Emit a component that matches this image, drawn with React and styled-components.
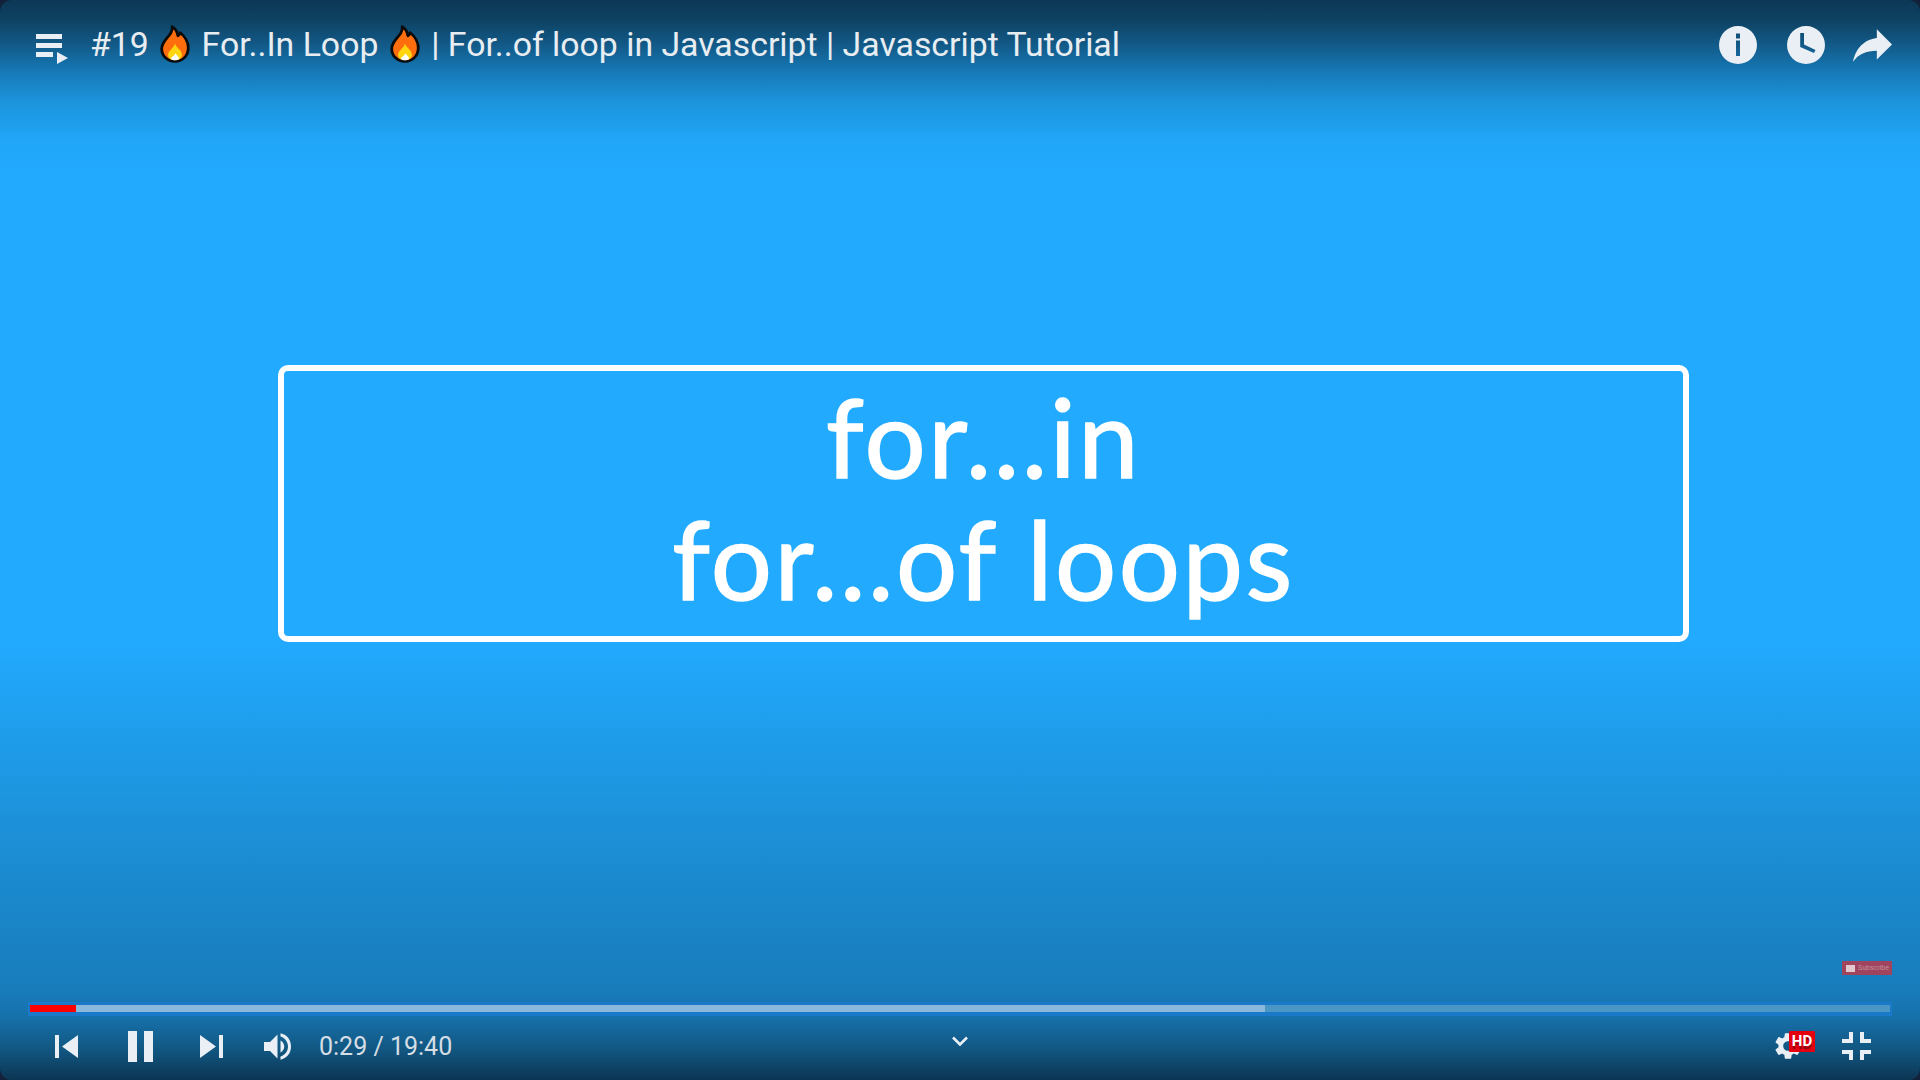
import React from "react";
import styled, { createGlobalStyle } from "styled-components";

const Global = createGlobalStyle`
  html, body { margin: 0; padding: 0; background: #14213a; }
  body { width: 1920px; height: 1080px; overflow: hidden; font-family: Roboto, "Liberation Sans", sans-serif; }
`;

const ICON = "#e9eff5";

const Player = styled.div`
  width: 1920px;
  height: 1080px;
  display: flex;
  flex-direction: column;
  overflow: hidden;
  border-radius: 12px;
  background: linear-gradient(
    180deg,
    #0c3755 0,
    #0e4263 20px,
    #125a88 45px,
    #1677b4 70px,
    #1c93da 100px,
    #21a6f8 140px,
    #22aaff 175px,
    #22aaff 640px,
    #1f9fee 720px,
    #1c8fd6 840px,
    #187cbb 990px,
    #166fa8 1020px,
    #115680 1050px,
    #0c3553 1080px
  );
`;

const TopBar = styled.header`
  height: 90px;
  flex: none;
  display: flex;
  align-items: center;
  padding: 0 28px 0 36px;
`;

const QueueIcon = styled.svg`
  width: 32px;
  height: 32px;
  margin: 10px 22px 0 0;
  flex: none;
  fill: ${ICON};
`;

const Title = styled.h1`
  margin: 0;
  flex: 1;
  font: 400 33.8px/44px Roboto, sans-serif;
  color: #e8edf2;
  white-space: pre;
`;

const Flame = styled.svg`
  width: 30px;
  height: 38px;
  margin: 0 3px;
  vertical-align: -7px;
`;

const TopActions = styled.div`
  display: flex;
  align-items: center;
  gap: 28px;
`;

const TopIcon = styled.svg`
  display: block;
  width: ${(p) => p.$w}px;
  height: ${(p) => p.$h}px;
  margin-right: ${(p) => p.$mr || 0}px;
  fill: ${ICON};
`;

const Stage = styled.main`
  flex: 1;
  position: relative;
  display: flex;
  align-items: flex-start;
  padding: 275px 0 0 278px;
`;

const TitleCard = styled.div`
  box-sizing: border-box;
  width: 1411px;
  height: 277px;
  border: 6px solid #fff;
  border-radius: 10px;
  display: flex;
  flex-direction: column;
  align-items: center;
  justify-content: center;
  padding-bottom: 14px;
  color: #fff;
  font: 400 108px/122px Lato, "Open Sans", sans-serif;
  letter-spacing: 2.5px;
  -webkit-text-stroke: 1.5px #fff;
`;

const CardLine = styled.div`
  white-space: pre;
`;

const Watermark = styled.div`
  position: absolute;
  right: 28px;
  bottom: 27px;
  width: 50px;
  height: 14px;
  box-sizing: border-box;
  padding-left: 4px;
  display: flex;
  align-items: center;
  gap: 3px;
  background: rgba(205, 50, 60, 0.75);
  border-radius: 1px;
  color: rgba(255, 255, 255, 0.4);
  font: 400 7px/14px Roboto, sans-serif;
  white-space: nowrap;
`;

const WatermarkMark = styled.span`
  width: 9px;
  height: 7px;
  background: rgba(255, 255, 255, 0.7);
  flex: none;
`;

const Progress = styled.div`
  flex: none;
  margin: 0 28px;
  padding: 3px 2px 4px;
  background: #1a79c8;
  display: flex;
`;

const Segment = styled.div`
  height: 7px;
  width: ${(p) => p.$w || 0}px;
  flex: ${(p) => (p.$w ? "none" : 1)};
  background: ${(p) => p.$c};
`;

const Controls = styled.footer`
  flex: none;
  height: 60px;
  padding: 0 49px 4px;
  display: grid;
  grid-template-columns: 1fr auto 1fr;
  align-items: center;
`;

const LeftGroup = styled.div`
  display: flex;
  align-items: center;
  margin-left: 6px;
`;

const RightGroup = styled.div`
  display: flex;
  align-items: center;
  justify-content: flex-end;
  gap: 27px;
`;

const Ctl = styled.svg`
  display: block;
  flex: none;
  width: ${(p) => p.$w}px;
  height: ${(p) => p.$h}px;
  margin-right: ${(p) => p.$mr || 0}px;
  fill: ${ICON};
`;

const Time = styled.span`
  padding-top: 2px;
  font: 400 25px/30px Roboto, sans-serif;
  color: #d6dde4;
  white-space: pre;
`;

const Chevron = styled.svg`
  display: block;
  width: 16px;
  height: 10px;
  margin-bottom: 10px;
  fill: none;
  stroke: ${ICON};
  stroke-width: 2.6;
`;

const SettingsWrap = styled.div`
  position: relative;
  width: 40px;
  height: 32px;
`;

const Gear = styled.svg`
  display: block;
  position: absolute;
  left: -3px;
  top: 0;
  width: 32px;
  height: 32px;
  fill: ${ICON};
`;

const HdBadge = styled.span`
  position: absolute;
  right: 0;
  top: 1px;
  width: 26px;
  height: 21px;
  background: #e5000f;
  border-radius: 1px;
  color: #fff;
  font: 700 15px/21px Roboto, sans-serif;
  text-align: center;
  text-shadow: 0 3px 0 #8f0712;
`;

const FlameIcon = () => (
  <Flame viewBox="0 0 26 35" preserveAspectRatio="none" aria-hidden="true">
    <path
      d="M10.5 1.5C13 3 15 6.5 15.5 10c1-.5 2-1.5 2-3 4.5 4 7 9 7 14 0 7.5-5 12.500-11.500 12.500S1.500 28.500 1.500 22c0-6 4-9 6.500-12.500 1.500-2 3-4.500 2.500-8z"
      fill="#ff6d0d"
      stroke="#0b0b0b"
      strokeWidth="2.4"
      strokeLinejoin="round"
    />
    <path d="M13 17c1 4 6 6 6 10.500 0 3.500-3 5-6 5s-6-1.500-6-5c0-4 5-6 6-10.500z" fill="#ffd50f" />
    <path d="M13.500 26c.8 2 3 3 3 4.800 0 1-1.500 1.700-3.500 1.700s-3.500-.7-3.500-1.700c0-1.500 3-2 4-4.800z" fill="#fff" />
  </Flame>
);

export default function App() {
  return (
    <>
      <Global />
      <Player>
        <TopBar>
          <QueueIcon viewBox="0 0 32 32" aria-hidden="true">
            <path d="M0 0h26v5H0zM0 9h26v5H0zM0 18h17v5H0zM21 18l11 6-11 6z" />
          </QueueIcon>
          <Title>
            #19 <FlameIcon /> For..In Loop <FlameIcon /> | For..of loop in Javascript | Javascript Tutorial
          </Title>
          <TopActions>
            <TopIcon $w={38} $h={38} $mr={2} viewBox="0 0 38 38" fillRule="evenodd" aria-hidden="true">
              <path d="M19 0a19 19 0 1 0 0 38 19 19 0 0 0 0-38zM17 7.500h4v5h-4zM17 14.500h4V30h-4z" />
            </TopIcon>
            <TopIcon $w={38} $h={38} viewBox="0 0 38 38" fillRule="evenodd" aria-hidden="true">
              <path d="M19 0a19 19 0 1 0 0 38 19 19 0 0 0 0-38zM13.200 7H17v11.500L28.500 24 27 27l-13.800-6z" />
            </TopIcon>
            <TopIcon $w={39} $h={33} viewBox="3 5 18 15" aria-hidden="true">
              <path d="M14 9V5l7 7-7 7v-4.100c-5 0-8.500 1.600-11 5.100 1-5 4-10 11-11z" />
            </TopIcon>
          </TopActions>
        </TopBar>

        <Stage>
          <TitleCard>
            <CardLine>for...in</CardLine>
            <CardLine>for...of loops</CardLine>
          </TitleCard>
          <Watermark>
            <WatermarkMark />
            Subscribe
          </Watermark>
        </Stage>

        <Progress>
          <Segment $w={46} $c="#ff0000" />
          <Segment $w={1189} $c="#8ab9dc" />
          <Segment $c="#4a96c5" />
        </Progress>

        <Controls>
          <LeftGroup>
            <Ctl $w={23} $h={23} $mr={50} viewBox="0 0 23 23" aria-hidden="true">
              <path d="M0 0h4v23H0zM23 0v23L7 11.500z" />
            </Ctl>
            <Ctl $w={25} $h={31} $mr={47} viewBox="0 0 25 31" aria-hidden="true">
              <path d="M0 0h9v31H0zM16 0h9v31h-9z" />
            </Ctl>
            <Ctl $w={23} $h={23} $mr={41} viewBox="0 0 23 23" aria-hidden="true">
              <path d="M0 0l16 11.500L0 23zM19 0h4v23h-4z" />
            </Ctl>
            <Ctl $w={27} $h={27} $mr={28} viewBox="3 3 18 18" aria-hidden="true">
              <path d="M3 9v6h4l5 5V4L7 9H3zm13.500 3c0-1.770-1.020-3.290-2.500-4.030v8.050c1.480-.730 2.500-2.250 2.500-4.020zM14 3.230v2.060c2.890.860 5 3.540 5 6.710s-2.110 5.850-5 6.710v2.060c4.010-.910 7-3.900 7-8.770s-2.990-7.860-7-8.770z" />
            </Ctl>
            <Time>0:29 / 19:40</Time>
          </LeftGroup>

          <Chevron viewBox="0 0 16 10" aria-hidden="true">
            <path d="M1 1.500l7 7 7-7" />
          </Chevron>

          <RightGroup>
            <SettingsWrap>
              <Gear viewBox="0 0 24 24" aria-hidden="true">
                <path d="M19.140 12.940c.040-.300.060-.610.060-.940 0-.320-.020-.640-.070-.940l2.030-1.580c.180-.140.230-.410.120-.610l-1.920-3.320c-.120-.220-.370-.290-.590-.220l-2.390.960c-.500-.380-1.030-.700-1.620-.940l-.360-2.540c-.040-.240-.240-.410-.480-.410h-3.840c-.240 0-.430.170-.470.410l-.360 2.540c-.590.240-1.130.570-1.620.940l-2.390-.960c-.220-.080-.470 0-.590.220L2.740 8.870c-.120.210-.080.470.120.610l2.030 1.580c-.050.300-.090.630-.090.940s.020.640.070.940l-2.030 1.580c-.180.140-.230.410-.120.610l1.920 3.320c.120.220.370.290.590.220l2.390-.960c.500.380 1.030.700 1.620.940l.360 2.540c.050.240.240.410.480.410h3.840c.240 0 .440-.170.470-.410l.360-2.540c.590-.240 1.130-.560 1.620-.940l2.390.960c.220.080.470 0 .590-.220l1.920-3.320c.120-.220.070-.470-.12-.61l-2.010-1.580zM12 15.600c-1.980 0-3.600-1.620-3.600-3.600s1.620-3.600 3.600-3.600 3.600 1.620 3.600 3.600-1.620 3.600-3.600 3.600z" />
              </Gear>
              <HdBadge>HD</HdBadge>
            </SettingsWrap>
            <Ctl $w={29} $h={28} viewBox="0 0 29 28" aria-hidden="true">
              <path d="M7 0h4v11H0V7h7zM18 0h4v7h7v4H18zM0 18h11v10H7v-6H0zM18 18h11v4h-7v6h-4z" />
            </Ctl>
          </RightGroup>
        </Controls>
      </Player>
    </>
  );
}
